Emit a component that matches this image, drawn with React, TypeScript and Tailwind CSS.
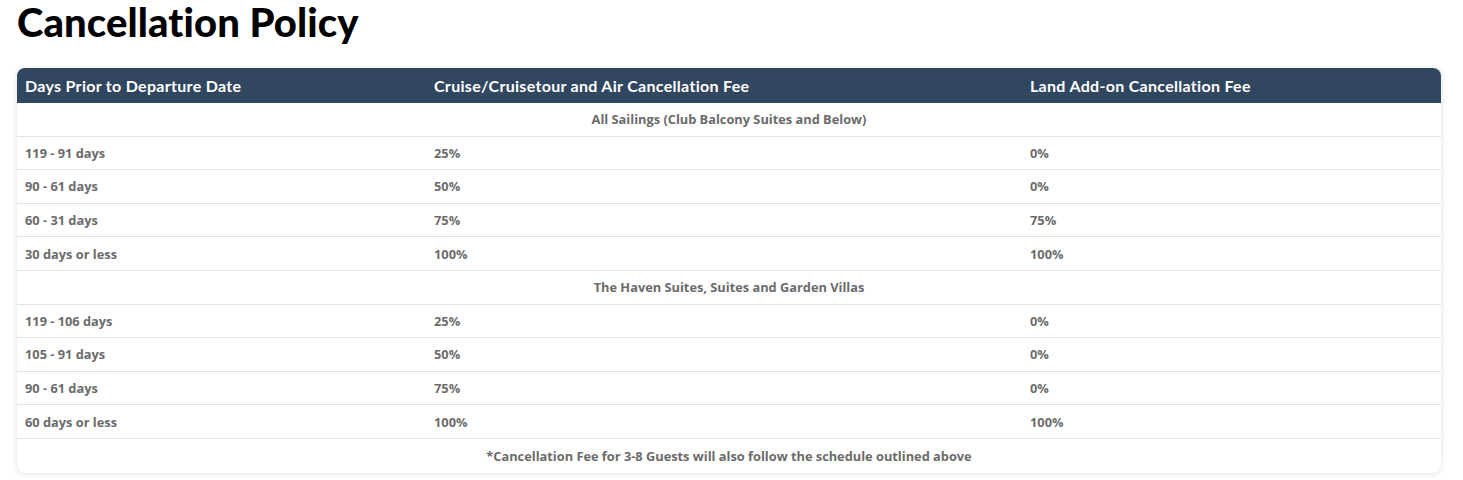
const rows: (string[] | string)[] = [
  'All Sailings (Club Balcony Suites and Below)',
  ['119 - 91 days', '25%', '0%'],
  ['90 - 61 days', '50%', '0%'],
  ['60 - 31 days', '75%', '75%'],
  ['30 days or less', '100%', '100%'],
  'The Haven Suites, Suites and Garden Villas',
  ['119 - 106 days', '25%', '0%'],
  ['105 - 91 days', '50%', '0%'],
  ['90 - 61 days', '75%', '0%'],
  ['60 days or less', '100%', '100%'],
  '*Cancellation Fee for 3-8 Guests will also follow the schedule outlined above',
]

export default function App() {
  return (
    <div className="min-h-[480px] bg-white px-[17px] pr-[22px]">
      <h1 className="font-['Lato',sans-serif] text-[40px] font-black leading-[44px] tracking-[0.1px] text-black h-[68px]">
        Cancellation Policy
      </h1>
      <div className="rounded-lg bg-white shadow-[0_1px_6px_rgba(0,0,0,0.12)] overflow-hidden">
        <div className="grid grid-cols-[409px_596px_1fr] h-[35px] items-center bg-[#31465f] font-['Lato',sans-serif] text-[16px] font-bold tracking-[0.3px] text-white">
          <div className="pl-2">Days Prior to Departure Date</div>
          <div className="pl-2">Cruise/Cruisetour and Air Cancellation Fee</div>
          <div className="pl-2">Land Add-on Cancellation Fee</div>
        </div>
        {rows.map((r, i) => (
          <div
            key={i}
            className={`h-[33.6px] pt-[1px] font-['Open_Sans',sans-serif] text-[12.8px] font-bold text-[#6b6b6b] ${
              i < rows.length - 1 ? 'border-b border-[#e2e2e2]' : ''
            }`}
          >
            {typeof r === 'string' ? (
              <div className="flex h-full items-center justify-center">{r}</div>
            ) : (
              <div className="grid h-full grid-cols-[409px_596px_1fr] items-center">
                {r.map((c, j) => (
                  <div key={j} className="pl-2">{c}</div>
                ))}
              </div>
            )}
          </div>
        ))}
      </div>
    </div>
  )
}
